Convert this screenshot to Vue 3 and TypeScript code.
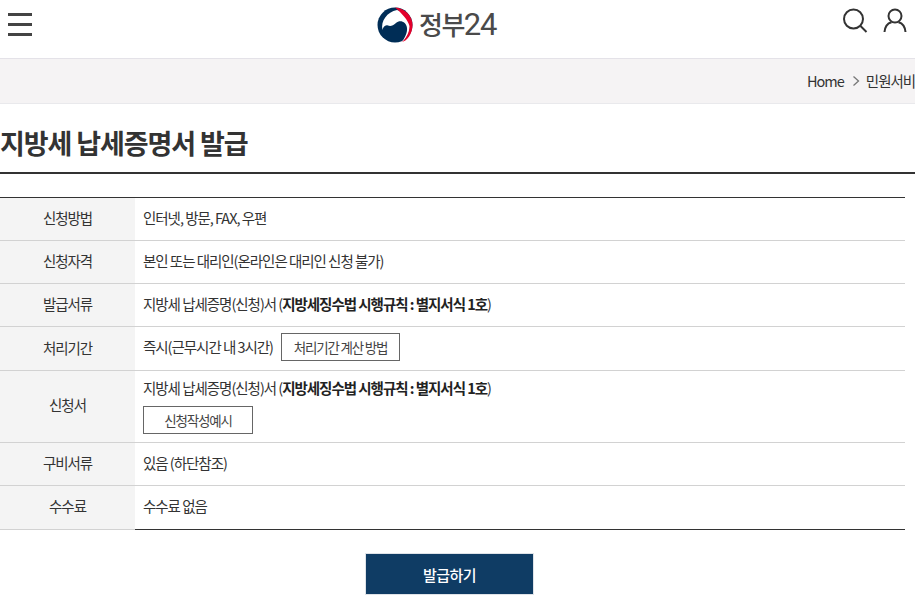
<script setup lang="ts">
interface Row { label: string; text: string; bold?: string; btn?: string; below?: string }
const rows: Row[] = [
  { label: '신청방법', text: '인터넷, 방문, FAX, 우편' },
  { label: '신청자격', text: '본인 또는 대리인(온라인은 대리인 신청 불가)' },
  { label: '발급서류', text: '지방세 납세증명(신청)서 (', bold: '지방세징수법 시행규칙 : 별지서식 1호' },
  { label: '처리기간', text: '즉시(근무시간 내 3시간)', btn: '처리기간 계산 방법' },
  { label: '신청서', text: '지방세 납세증명(신청)서 (', bold: '지방세징수법 시행규칙 : 별지서식 1호', below: '신청작성예시' },
  { label: '구비서류', text: '있음 (하단참조)' },
  { label: '수수료', text: '수수료 없음' },
]
</script>

<template>
  <div class="page">
    <header class="top">
      <button class="menu" aria-label="메뉴"><i></i><i></i><i></i></button>
      <div class="logo">
        <svg width="36" height="36" viewBox="0 0 36 36">
          <circle cx="18" cy="18" r="17.500" fill="#002d56" />
          <path d="M5.500 23C3.500 14 10 5 20 3c8 2 13 9 13 16 0 7-4 13-8 16 3-5 5.500-9 5-14-.5-6-7-9-11-5-3 3-6 3.500-8 2.500-3-1-5 1.500-5.500 4.500Z" fill="#fff" />
          <path d="M18 .5C28 1 35.500 9 35.500 18c0 9-5.500 16-10.500 17 4.500-4 7.500-10 7.500-16C31 13 25 6.500 18 .5Z" fill="#e3002b" />
        </svg>
        <span class="logotext">정부<em>24</em></span>
      </div>
      <div class="tools">
        <svg width="26" height="26" viewBox="0 0 26 26" fill="none" stroke="#333" stroke-width="2">
          <circle cx="11.500" cy="11" r="9.500" />
          <path d="M18.500 18l6 6" />
        </svg>
        <svg width="24" height="26" viewBox="0 0 24 26" fill="none" stroke="#333" stroke-width="2">
          <circle cx="12" cy="8" r="6.500" />
          <path d="M1.500 24c.5-6 4-9 7-9.800M22.500 24c-.5-6-4-9-7-9.800" />
        </svg>
      </div>
    </header>

    <nav class="crumbs">
      <span class="home">Home</span>
      <svg class="chev" width="8" height="12" viewBox="0 0 8 12" fill="none" stroke="#777" stroke-width="1.300"><path d="M1.500 1.500 6.500 6l-5 4.500" /></svg>
      <span class="cur">민원서비</span>
    </nav>

    <h1 class="title">지방세 납세증명서 발급</h1>

    <table class="info">
      <tbody>
        <tr v-for="r in rows" :key="r.label">
          <th>{{ r.label }}</th>
          <td>
            <div class="line">
              <span>{{ r.text }}<template v-if="r.bold"><b>{{ r.bold }}</b>)</template></span>
              <span v-if="r.btn" class="btn wide">{{ r.btn }}</span>
            </div>
            <span v-if="r.below" class="btn below">{{ r.below }}</span>
          </td>
        </tr>
      </tbody>
    </table>

    <div class="action"><button class="issue">발급하기</button></div>
  </div>
</template>

<style>
html, body { margin: 0; background: #fff; overflow: hidden; }
</style>

<style scoped>
.page {
  width: 915px;
  height: 616px;
  overflow: hidden;
  font-family: "Noto Sans CJK KR", "Noto Sans", sans-serif;
  color: #333;
}
.top {
  height: 58px;
  position: relative;
  display: flex;
  align-items: flex-start;
  justify-content: space-between;
  border-bottom: 1px solid #e4e2e8;
}
.menu {
  display: flex;
  flex-direction: column;
  gap: 7px;
  width: 24px;
  margin: 13px 0 0 8px;
  padding: 0;
  border: 0;
  background: none;
}
.menu i { display: block; height: 3px; background: #444; }
.logo {
  position: absolute;
  left: 377px;
  top: 6px;
  display: flex;
  align-items: center;
  gap: 6px;
}
.logotext {
  font-size: 26px;
  line-height: 36px;
  font-weight: 500;
  color: #4a4a4a;
  letter-spacing: -1.500px;
}
.logotext em {
  font: 400 31px/36px Roboto, sans-serif;
  letter-spacing: -1.200px;
}
.tools {
  display: flex;
  gap: 15px;
  margin: 8px 8px 0 0;
}
.crumbs {
  height: 42px;
  padding-bottom: 2px;
  display: flex;
  align-items: center;
  background: #f5f3f4;
  border-bottom: 1px solid #e9e9ec;
  padding-left: 807px;
  font-size: 14.500px;
  letter-spacing: -1px;
  color: #333;
  white-space: nowrap;
}
.chev { flex: none; margin: 2px 6px 0 8px; }
.title {
  margin: 0;
  height: 68px;
  line-height: 78px;
  font-size: 27px;
  font-weight: 700;
  letter-spacing: -1.100px;
  color: #333;
  border-bottom: 2px solid #333;
}
.info {
  margin-top: 23px;
  width: 905px;
  border-collapse: collapse;
  border-top: 1px solid #333;
  font-size: 14.500px;
  letter-spacing: -1.030px;
}
.info tr { border-bottom: 1px solid #d2d2d2; }
.info tr:last-child { border-bottom: 0; }
.info tr:last-child th { height: 44px; padding-bottom: 5px; border-bottom: 1px solid #d2d2d2; }
.info tr:nth-child(5) th { padding-bottom: 5px; }
.info tr:last-child td { border-bottom: 1px solid #333; }
.info th {
  width: 135px;
  box-sizing: border-box;
  padding: 0 0 3px;
  font-weight: 400;
  background: #f4f4f4;
  text-align: center;
  height: 43px;
}
.info td { padding: 6px 0 9px 8px; line-height: 22px; }
.info td b { font-weight: 700; color: #222; }
.line { display: flex; align-items: center; gap: 8px; white-space: nowrap; }
.btn {
  display: flex;
  align-items: center;
  justify-content: center;
  height: 26px;
  border: 1px solid #666;
  font-size: 13.500px;
  letter-spacing: -1.200px;
  color: #444;
}
.wide { width: 117px; }
.below { width: 108px; margin: 7px 0 -1px; }
.action { display: flex; justify-content: center; width: 898px; margin-top: 23px; }
.issue {
  width: 169px;
  height: 42px;
  padding-left: 7px;
  background: #0f3c64;
  border: 1px solid #dfe3e8;
  color: #fff;
  font: 500 15px "Noto Sans CJK KR", sans-serif;
  letter-spacing: -0.500px;
}
</style>
